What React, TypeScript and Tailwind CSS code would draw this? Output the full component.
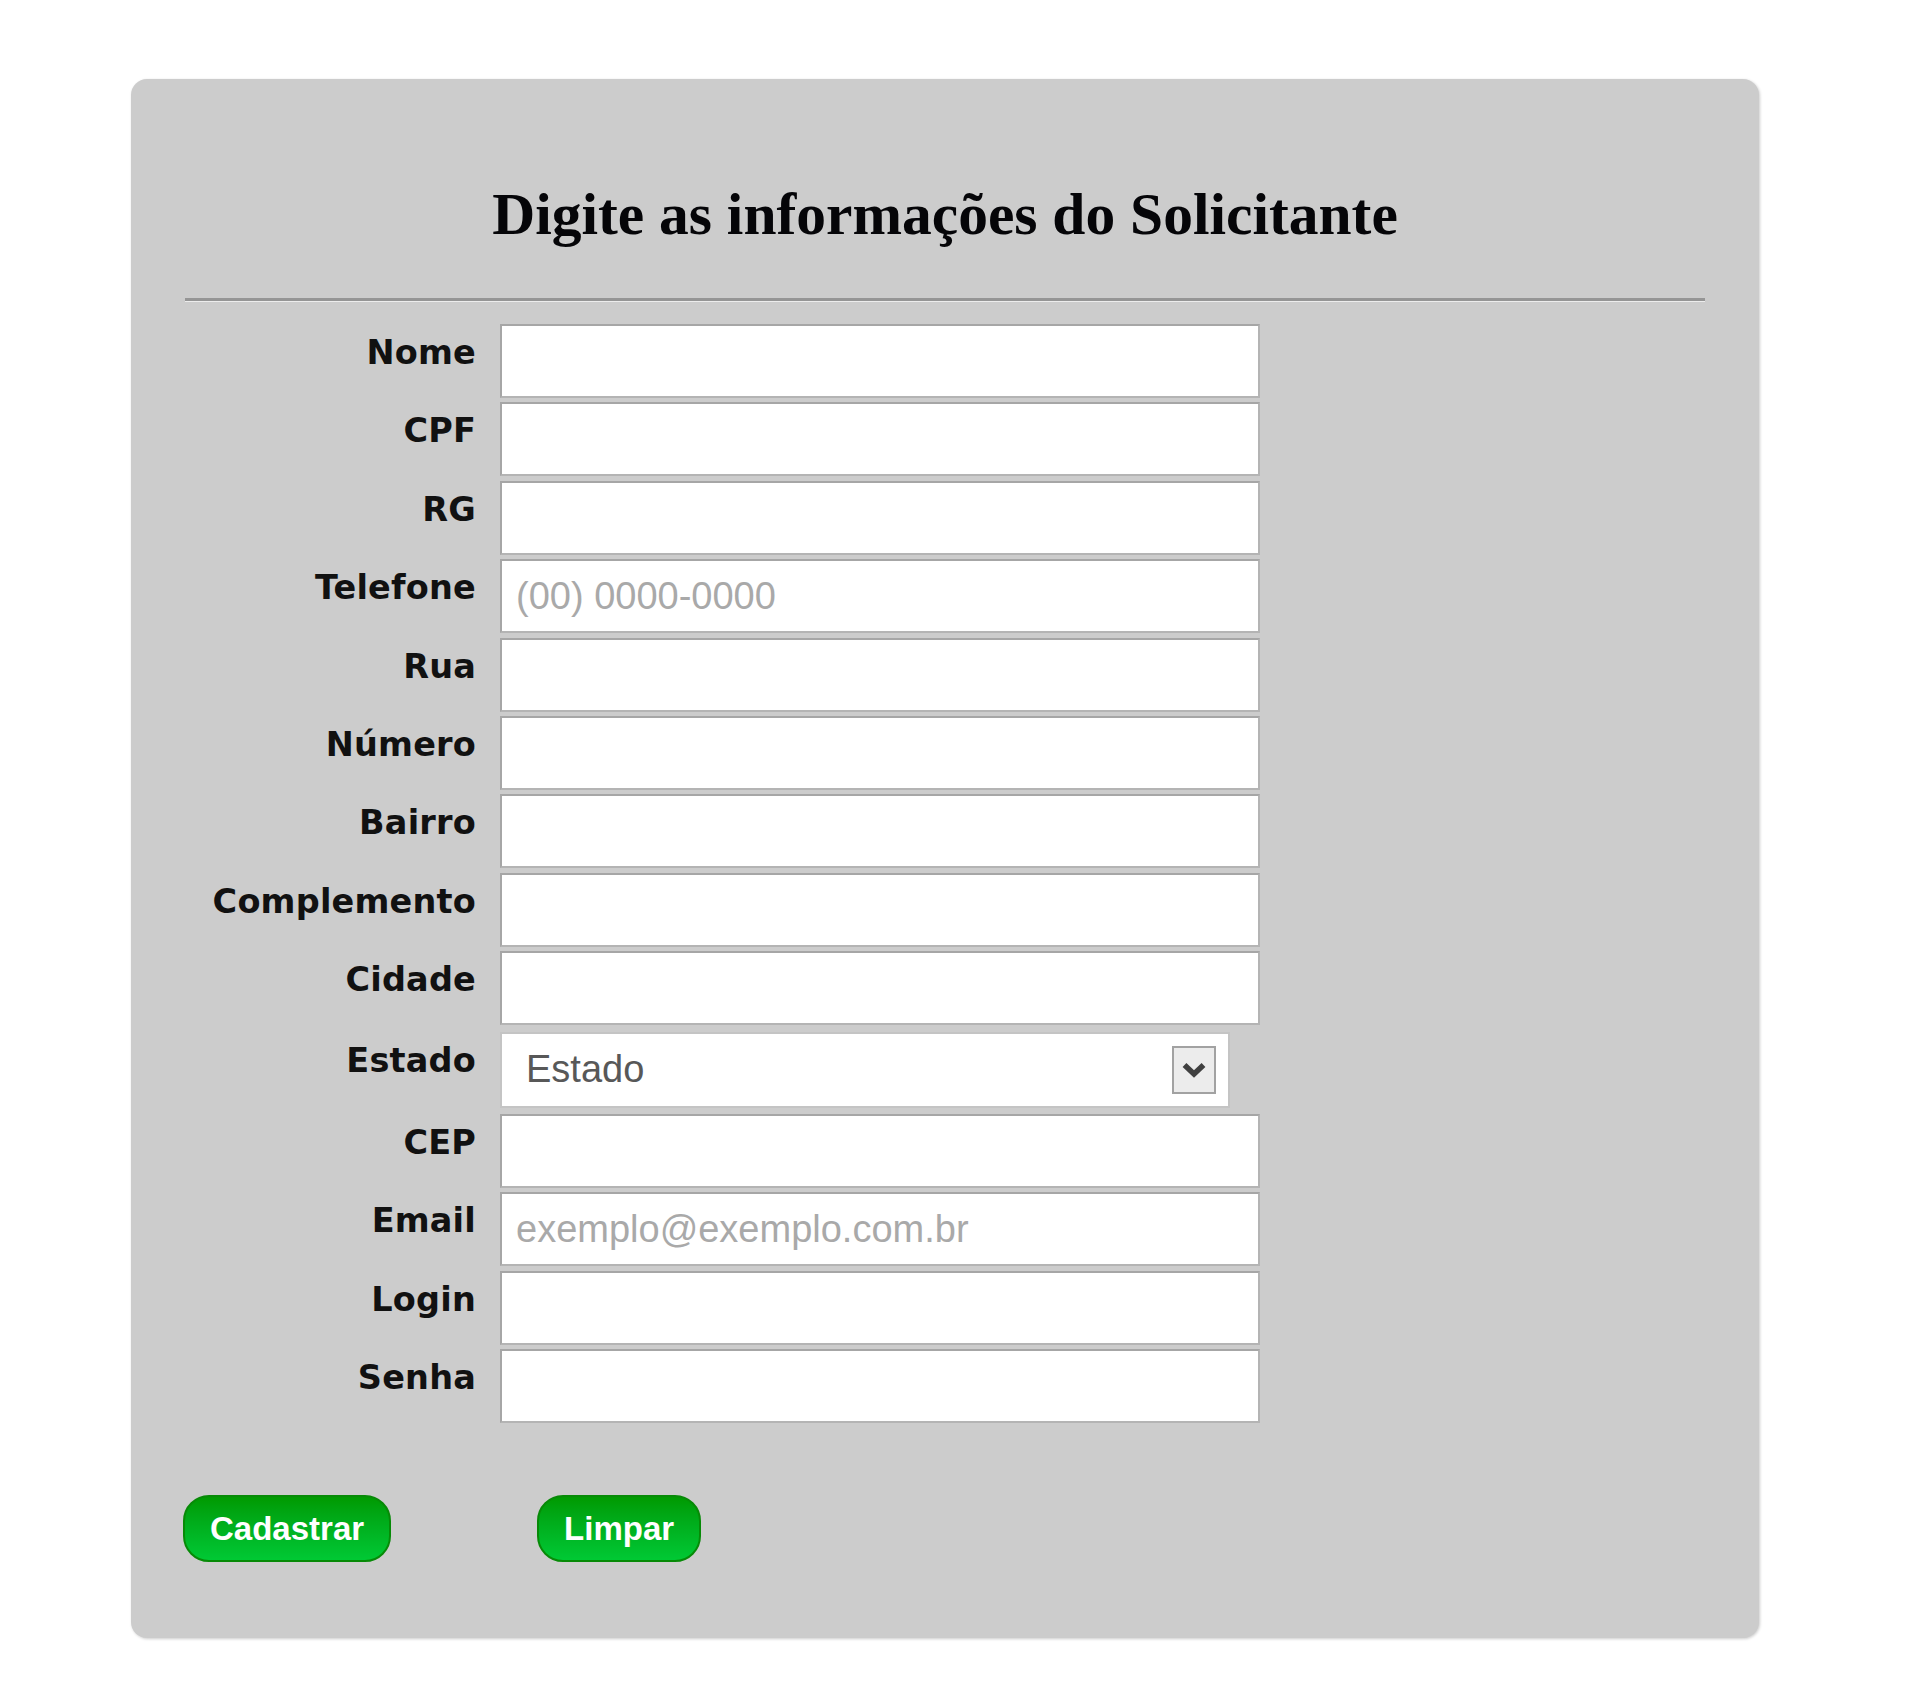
const fields: { label: string; placeholder?: string; select?: boolean }[] = [
  { label: "Nome" },
  { label: "CPF" },
  { label: "RG" },
  { label: "Telefone", placeholder: "(00) 0000-0000" },
  { label: "Rua" },
  { label: "Número" },
  { label: "Bairro" },
  { label: "Complemento" },
  { label: "Cidade" },
  { label: "Estado", select: true },
  { label: "CEP" },
  { label: "Email", placeholder: "exemplo@exemplo.com.br" },
  { label: "Login" },
  { label: "Senha" },
];

function Label({ text }: { text: string }) {
  return (
    <label className="pt-[10px] text-right font-['DejaVu_Sans',sans-serif] text-[33.5px] font-bold leading-[38px] tracking-[0.2px] text-[#111]">
      {text}
    </label>
  );
}

function EstadoSelect() {
  return (
    <div className="flex h-[76px] w-[730px] items-center justify-between border-2 border-[#c4c4c4] bg-white pl-[24px] pr-[12px]">
      <span className="font-['Liberation_Sans',Arial,sans-serif] text-[38px] text-[#585858]">Estado</span>
      <span className="flex h-[48px] w-[44px] items-center justify-center border-2 border-[#a2a2a2] bg-[#ececec]">
        <svg width="24" height="16" viewBox="0 0 24 16" fill="none">
          <path d="M2.5 3l9.5 9 9.5-9" stroke="#404040" strokeWidth="5.5" strokeLinejoin="miter" />
        </svg>
      </span>
    </div>
  );
}

function GreenButton({ children }: { children: string }) {
  return (
    <button
      type="button"
      className="h-[67px] rounded-[26px] border-2 border-[#078a07] bg-gradient-to-b from-[#009a00] to-[#00c934] px-[25px] font-['Liberation_Sans',Arial,sans-serif] text-[33px] font-bold text-white"
    >
      {children}
    </button>
  );
}

export default function App() {
  return (
    <div className="min-h-[1697px] bg-white pl-[131px] pt-[79px]">
      <div className="h-[1559px] w-[1628px] rounded-[16px] bg-[#cccccc] px-[54px] pt-[101px] shadow-[1px_1px_3px_rgba(0,0,0,0.2)]">
        <h1 className="text-center font-['Liberation_Serif','Times_New_Roman',serif] text-[59.5px] font-bold leading-[69px] text-[#050508]">
          Digite as informações do Solicitante
        </h1>
        <hr className="mt-[49px] border-t-[3px] border-b border-t-[#959595] border-b-[#ececec]" />

        <div className="mt-[22px] flex flex-col gap-[4.4px]">
          {fields.map((f) => (
            <div
              key={f.label}
              className={`grid grid-cols-[291px_760px] gap-x-[24px] ${f.select ? "my-[2px]" : ""}`}
            >
              <Label text={f.label} />
              {f.select ? (
                <EstadoSelect />
              ) : (
                <input
                  type="text"
                  placeholder={f.placeholder}
                  className="h-[74px] w-[760px] border-2 border-[#b4b4b4] border-l-[#a6a6a6] border-t-[#a6a6a6] bg-white px-[14px] font-['Liberation_Sans',Arial,sans-serif] text-[38px] text-[#333] outline-none placeholder:text-[#a9a9a9]"
                />
              )}
            </div>
          ))}
        </div>

        <div className="-ml-[2px] mt-[72px] flex gap-[146px]">
          <GreenButton>Cadastrar</GreenButton>
          <GreenButton>Limpar</GreenButton>
        </div>
      </div>
    </div>
  );
}
